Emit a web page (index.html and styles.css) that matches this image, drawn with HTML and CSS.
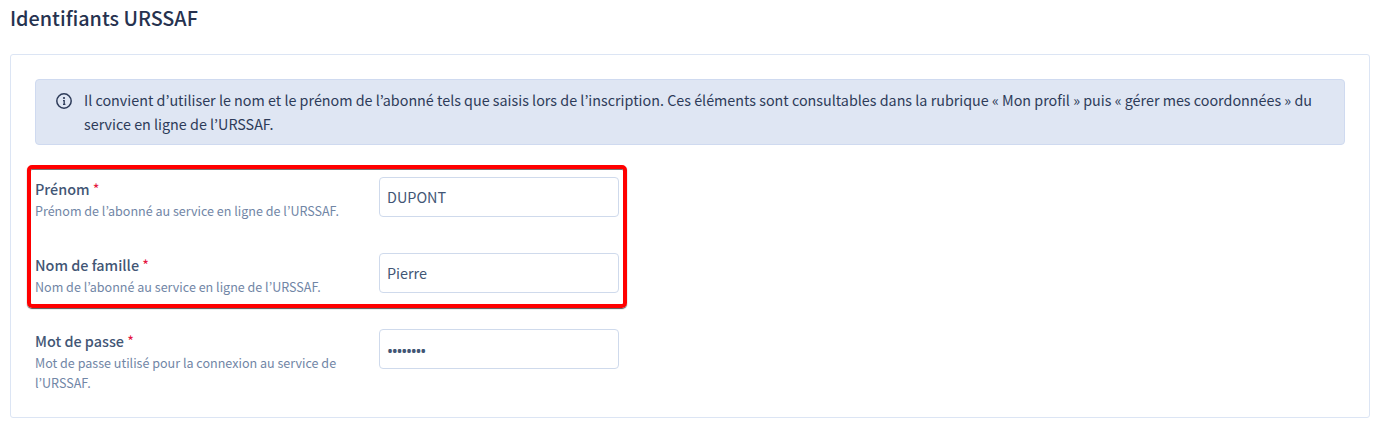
FILE: index.html
```html
<!DOCTYPE html>
<html lang="fr">
<head>
    <meta charset="UTF-8">
    <meta name="viewport" content="width=device-width, initial-scale=1.0">
    <title>Identifiants URSSAF</title>
    <link rel="stylesheet" href="styles.css">
</head>
<body>
    <h1>Identifiants URSSAF</h1>
    <form class="card">
        <div class="alert">
            <svg class="alert-icon" viewBox="0 0 16 16" width="16" height="16" fill="none" stroke="currentColor">
                <circle cx="8" cy="8" r="7.2" stroke-width="1.5"/>
                <path d="M7 7.6H8.2V11.5M7 11.4H9.4" stroke-width="1.3"/>
                <circle cx="8" cy="5" r="1.1" fill="currentColor" stroke="none"/>
            </svg>
            <p>Il convient d’utiliser le nom et le prénom de l’abonné tels que saisis lors de l’inscription. Ces éléments sont consultables dans la rubrique «&nbsp;Mon profil&nbsp;» puis «&nbsp;gérer mes coordonnées&nbsp;» du service en ligne de l’URSSAF.</p>
        </div>

        <div class="highlight">
            <div class="form-group">
                <div class="form-text">
                    <label for="firstName">Prénom <span class="required">*</span></label>
                    <p class="hint">Prénom de l’abonné au service en ligne de l’URSSAF.</p>
                </div>
                <input type="text" id="firstName" value="DUPONT">
            </div>
            <div class="form-group">
                <div class="form-text">
                    <label for="lastName">Nom de famille <span class="required">*</span></label>
                    <p class="hint">Nom de l’abonné au service en ligne de l’URSSAF.</p>
                </div>
                <input type="text" id="lastName" value="Pierre">
            </div>
        </div>

        <div class="form-group">
            <div class="form-text">
                <label for="password">Mot de passe <span class="required">*</span></label>
                <p class="hint">Mot de passe utilisé pour la connexion au service de l’URSSAF.</p>
            </div>
            <input type="password" class="password" id="password" value="password">
        </div>
    </form>
</body>
</html>
```

FILE: styles.css
```css
* {
    box-sizing: border-box;
}
body {
    font-family: "Noto Sans CJK KR", "Noto Sans", sans-serif;
    font-size: 14.4px;
    line-height: 24px;
    background-color: #fff;
    color: #425675;
    margin: 0;
    padding: 3px 13px 15px 10px;
}
h1 {
    margin: 0 0 21px;
    font-size: 19.8px;
    font-weight: 500;
    line-height: 30px;
    color: #26324f;
}
p {
    margin: 0;
}
.card {
    height: 364px;
    padding: 24px;
    border: 1px solid #dce5f4;
    border-radius: 3px;
}
.alert {
    display: flex;
    gap: 12px;
    height: 66px;
    padding: 8px 20px;
    border: 1px solid #cfdaf0;
    border-radius: 4px;
    background-color: #dfe6f3;
    color: #2d3b59;
    font-size: 14.33px;
}
.alert-icon {
    flex: none;
    margin-top: 5px;
}
.highlight {
    width: 600px;
    height: 143px;
    margin: 20px 0 21px -8px;
    padding: 8px 4px;
    border: 4px solid #f00;
    border-radius: 5px;
    box-shadow: 0 1px 1px #555, inset 0 1px 0 #777;
}
.form-group {
    display: flex;
    width: 584px;
    height: 76px;
}
.form-text {
    width: 344px;
    padding-right: 24px;
}
label {
    display: block;
    font-weight: 500;
    line-height: 24px;
}
.required {
    font-weight: 400;
    color: #e5173f;
}
.hint {
    font-size: 12.56px;
    line-height: 20px;
    color: #7186a6;
}
input {
    width: 240px;
    height: 40px;
    padding: 0 7px 2px;
    border: 1px solid #cfdaec;
    border-radius: 4px;
    background-color: #fff;
    color: #425675;
    font: inherit;
}
.password {
    padding-top: 3px;
    padding-bottom: 0;
    font-family: "Noto Sans", sans-serif;
    font-size: 16px;
    letter-spacing: -1.25px;
}
```
